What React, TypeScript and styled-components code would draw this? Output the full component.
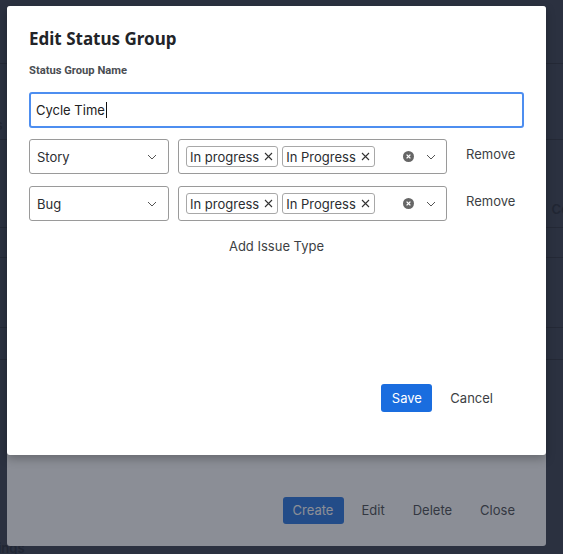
import React from "react";
import styled, { createGlobalStyle } from "styled-components";

const Global = createGlobalStyle`
  html, body { margin: 0; padding: 0; }
  body { font-family: Inter, "Noto Sans", sans-serif; }
  * { box-sizing: border-box; }
`;

const Page = styled.div`
  position: relative;
  width: 563px;
  height: 554px;
  overflow: hidden;
  background: #2b3140;
`;

const BgTable = styled.div`
  display: flex;
  flex-direction: column;
  color: #141a26;
  font-size: 13px;
  font-weight: 600;
`;

const BgRow = styled.div<{ $h: number; $line?: boolean; $align?: string }>`
  height: ${(p) => p.$h}px;
  display: flex;
  align-items: ${(p) => p.$align ?? "center"};
  justify-content: space-between;
  border-bottom: ${(p) => (p.$line ? "1.5px solid #1c212c" : "none")};
`;

const BgCell = styled.span<{ $shift?: number }>`
  white-space: nowrap;
  margin-left: ${(p) => p.$shift ?? 0}px;
`;

const BackModal = styled.div`
  position: absolute;
  left: 7px;
  top: 6px;
  width: 539px;
  height: 540px;
  background: #ffffff;
  border-radius: 3px;
  display: flex;
  flex-direction: column;
  justify-content: flex-end;
`;

const BackFooter = styled.div`
  display: flex;
  justify-content: flex-end;
  align-items: center;
  gap: 4px;
  padding: 0 19px 22px 0;
`;

const PrimaryButton = styled.button<{ $w: number }>`
  width: ${(p) => p.$w}px;
  height: 28px;
  border: none;
  border-radius: 3px;
  background: #1a6ddf;
  color: #ffffff;
  font-family: Inter, sans-serif;
  font-size: 13px;
  padding: 0;
`;

const TextButton = styled.button<{ $pad?: number }>`
  border: none;
  background: transparent;
  color: #3d3f44;
  font-family: Inter, sans-serif;
  font-size: 13px;
  padding: 6px ${(p) => p.$pad ?? 12}px;
`;

const CreateButton = styled(PrimaryButton)`
  height: 27px;
  margin-right: 2px;
`;

const Overlay = styled.div`
  position: absolute;
  inset: 0;
  background: rgba(43, 49, 64, 0.55);
`;

const Dialog = styled.div`
  position: absolute;
  left: 7px;
  top: 6px;
  width: 539px;
  height: 449px;
  background: #ffffff;
  border-radius: 3px;
  box-shadow: 0 4px 10px rgba(0, 0, 0, 0.25);
  padding: 20px 22px 43px 22px;
  display: flex;
  flex-direction: column;
`;

const Title = styled.h2`
  margin: 0;
  font-family: "Noto Sans", sans-serif;
  font-weight: 700;
  font-size: 17px;
  line-height: 26px;
  color: #222428;
`;

const Label = styled.div`
  margin-top: 12px;
  font-family: Roboto, sans-serif;
  font-weight: 700;
  font-size: 11.2px;
  color: #4a4d52;
  line-height: 14px;
`;

const NameInput = styled.div`
  margin-top: 14px;
  height: 36px;
  border: 2px solid #4d8ef0;
  border-radius: 3px;
  display: flex;
  align-items: center;
  padding-left: 5px;
  font-size: 13px;
  color: #222;
`;

const Caret = styled.span`
  display: inline-block;
  width: 1px;
  height: 16px;
  background: #111;
  margin-left: 1px;
`;

const Rows = styled.div`
  margin-top: 11px;
  display: flex;
  flex-direction: column;
  gap: 12px;
`;

const Row = styled.div`
  display: flex;
  align-items: flex-start;
  gap: 9px;
`;

const Box = styled.div<{ $w: number }>`
  width: ${(p) => p.$w}px;
  height: 35px;
  border: 1px solid #9a9a9a;
  border-radius: 3px;
  display: flex;
  align-items: center;
  font-size: 13px;
  color: #2b2d31;
`;

const SelectValue = styled.span`
  flex: 1;
  padding-left: 7px;
`;

const Tags = styled.div`
  flex: 1;
  display: flex;
  gap: 4px;
  padding-left: 7px;
`;

const Tag = styled.span`
  height: 21px;
  display: inline-flex;
  align-items: center;
  gap: 5px;
  padding: 0 4px 0 3px;
  border: 1px solid #a8a8a8;
  border-radius: 3px;
  font-size: 13px;
  color: #2b2d31;
`;

const IconSlot = styled.span<{ $mr: number }>`
  display: inline-flex;
  align-items: center;
  margin-right: ${(p) => p.$mr}px;
`;

const RemoveButton = styled(TextButton)`
  margin-left: 10px;
  margin-top: 1px;
  padding: 6px 0;
`;

const AddButton = styled(TextButton)`
  align-self: center;
  margin-top: 15px;
  padding: 2px 6px;
`;

const Footer = styled.div`
  margin-top: auto;
  display: flex;
  justify-content: flex-end;
  align-items: center;
  gap: 6px;
  padding-right: 19px;
`;

const Chevron = () => (
  <svg width="10" height="6" viewBox="0 0 10 6" fill="none">
    <path d="M1 1l4 4 4-4" stroke="#555" strokeWidth="1" />
  </svg>
);

const SmallX = () => (
  <svg width="9" height="9" viewBox="0 0 9 9" fill="none">
    <path d="M1 1l7 7M8 1L1 8" stroke="#333" strokeWidth="1.1" />
  </svg>
);

const ClearIcon = () => (
  <svg width="11" height="11" viewBox="0 0 11 11">
    <circle cx="5.5" cy="5.5" r="5.5" fill="#666" />
    <path d="M3.6 3.6l3.8 3.8M7.4 3.6L3.6 7.4" stroke="#fff" strokeWidth="1.3" />
  </svg>
);

const rows = [
  { type: "Story", statuses: ["In progress", "In Progress"] },
  { type: "Bug", statuses: ["In progress", "In Progress"] },
];

export default function App() {
  return (
    <Page>
      <Global />
      <BgTable>
        <BgRow $h={64} $line />
        <BgRow $h={76} $line $align="flex-end">
          <BgCell $shift={-48} style={{ marginBottom: 6 }}>Process</BgCell>
        </BgRow>
        <BgRow $h={88} $line>
          <span />
          <BgCell style={{ marginRight: -14, marginTop: 50 }}>Con</BgCell>
        </BgRow>
        <BgRow $h={30} $line />
        <BgRow $h={70} $line />
        <BgRow $h={32} $line />
        <BgRow $h={182} />
        <BgRow $h={12}>
          <BgCell $shift={-27}>Settings</BgCell>
        </BgRow>
      </BgTable>
      <BackModal>
        <BackFooter>
          <CreateButton $w={61}>Create</CreateButton>
          <TextButton>Edit</TextButton>
          <TextButton>Delete</TextButton>
          <TextButton>Close</TextButton>
        </BackFooter>
      </BackModal>
      <Overlay />
      <Dialog>
        <Title>Edit Status Group</Title>
        <Label>Status Group Name</Label>
        <NameInput>
          Cycle Time
          <Caret />
        </NameInput>
        <Rows>
          {rows.map((r) => (
            <Row key={r.type}>
              <Box $w={140}>
                <SelectValue>{r.type}</SelectValue>
                <IconSlot $mr={11}>
                  <Chevron />
                </IconSlot>
              </Box>
              <Box $w={269}>
                <Tags>
                  {r.statuses.map((s) => (
                    <Tag key={s}>
                      {s}
                      <SmallX />
                    </Tag>
                  ))}
                </Tags>
                <IconSlot $mr={12}>
                  <ClearIcon />
                </IconSlot>
                <IconSlot $mr={10}>
                  <Chevron />
                </IconSlot>
              </Box>
              <RemoveButton>Remove</RemoveButton>
            </Row>
          ))}
        </Rows>
        <AddButton>Add Issue Type</AddButton>
        <Footer>
          <PrimaryButton $w={51}>Save</PrimaryButton>
          <TextButton $pad={12}>Cancel</TextButton>
        </Footer>
      </Dialog>
    </Page>
  );
}
